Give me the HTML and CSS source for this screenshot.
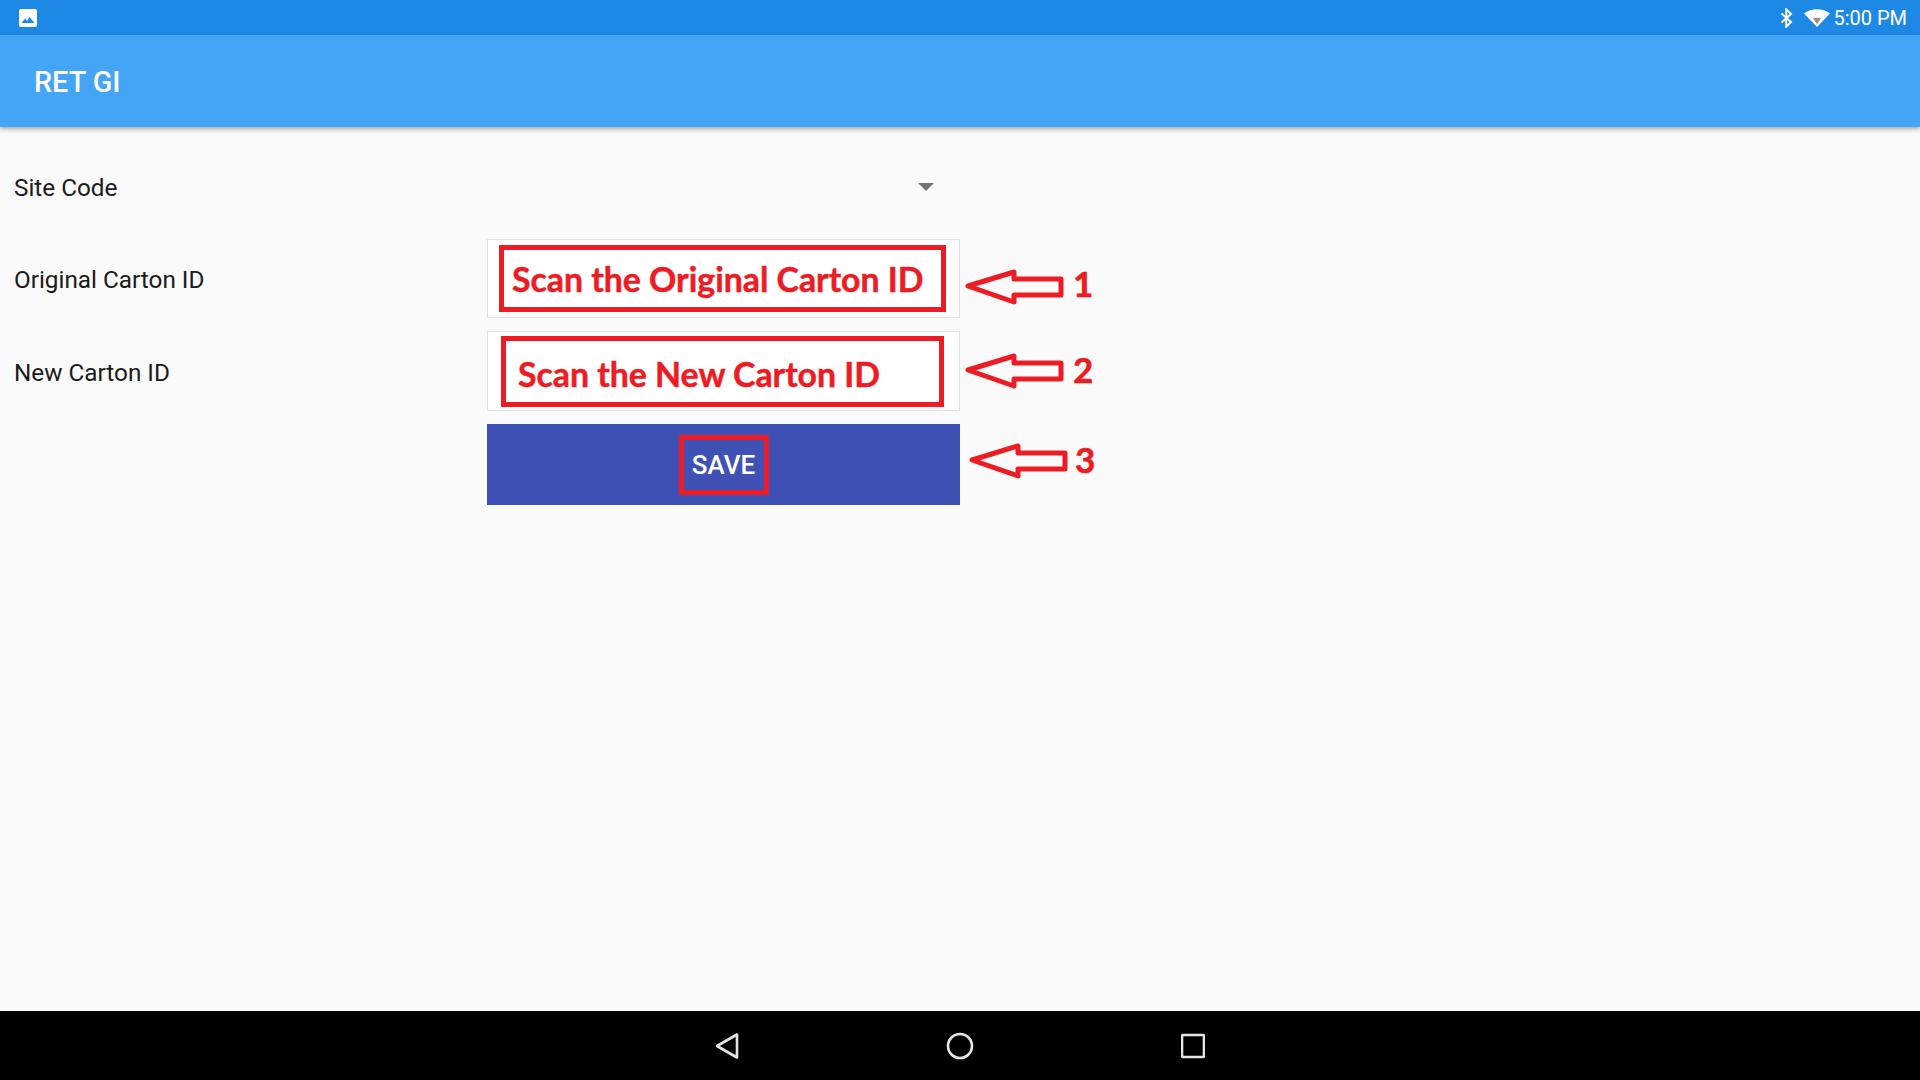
FILE: index.html
```html
<!DOCTYPE html>
<html lang="en">
<head>
<meta charset="utf-8">
<title>RET GI</title>
<link rel="stylesheet" href="styles.css">
</head>
<body>
<div class="screen">
  <div class="status-bar">
    <svg class="pic-icon" viewBox="0 0 18 18"><rect width="18" height="18" rx="2" fill="#fff"/><path d="M2.500 14 6 9.500l2 2.500 2.500-4 5 6z" fill="#1E88E5"/></svg>
    <div class="status-right">
      <svg class="bt-icon" viewBox="0 0 13 20"><path d="M1.500 5.500 11 14 6.300 18.600V1.400L11 6 1.500 14.500" fill="none" stroke="#fff" stroke-width="2"/></svg>
      <svg class="wifi-icon" viewBox="0 0 26 18"><path d="M0 4.500C7-1.200 19-1.200 26 4.500L13 18z" fill="#fff"/><path d="M9 9.500C11.500 8.500 14.500 8.500 17 9.500L13 15z" fill="#8f8f8f"/></svg>
      <span class="clock">5:00 PM</span>
    </div>
  </div>
  <header class="app-bar">RET GI</header>
  <main class="content">
    <div class="form">
      <div class="label label-site">Site Code</div>
      <div class="spinner"><span class="caret"></span></div>
      <div class="label">Original Carton ID</div>
      <div class="field">
        <div class="note note-first">Scan the Original Carton ID</div>
      </div>
      <div class="label label-new">New Carton ID</div>
      <div class="field">
        <div class="note note-second">Scan the New Carton ID</div>
      </div>
      <div class="spacer"></div>
      <button class="save"><span class="save-mark">SAVE</span></button>
    </div>

    <svg class="arrow arrow-one" viewBox="0 0 104 38"><path d="M5 19 51 5V12H98V28H51V35z"/></svg>
    <span class="step step-one">1</span>
    <svg class="arrow arrow-two" viewBox="0 0 104 38"><path d="M5 19 51 5V12H98V28H51V35z"/></svg>
    <span class="step step-two">2</span>
    <svg class="arrow arrow-three" viewBox="0 0 104 38"><path d="M5 19 51 5V12H98V28H51V35z"/></svg>
    <span class="step step-three">3</span>
  </main>
  <nav class="nav-bar">
    <svg class="nav-icon nav-back" viewBox="0 0 24 28"><path d="M2 14 22 2.500V25.500z"/></svg>
    <svg class="nav-icon nav-home" viewBox="0 0 28 28"><circle cx="14" cy="14" r="12"/></svg>
    <svg class="nav-icon nav-recent" viewBox="0 0 24 26"><rect x="1" y="2" width="22" height="22" rx="1"/></svg>
  </nav>
</div>
</body>
</html>
```

FILE: styles.css
```css
* { box-sizing: border-box; }
html, body { margin: 0; height: 100%; }
body { font-family: Roboto, sans-serif; background: #fafafa; }
.screen { width: 1920px; height: 1080px; display: flex; flex-direction: column; overflow: hidden; }

.status-bar {
  height: 35px; flex: none; background: #1e88e5; color: #fff;
  display: flex; align-items: center; justify-content: space-between;
  padding: 0 13px 0 19px;
}
.pic-icon { width: 18px; height: 18px; }
.status-right { display: flex; align-items: center; }
.bt-icon { width: 13px; height: 20px; margin-right: 11px; }
.wifi-icon { width: 26px; height: 18px; margin-right: 3px; }
.clock { font-size: 20px; line-height: 24px; }

.app-bar {
  height: 92px; flex: none; background: #42a5f5; color: #fff;
  font-size: 28.800px; font-weight: 500; display: flex; align-items: center;
  padding: 2px 0 0 34px;
  box-shadow: 0 2px 5px rgba(0, 0, 0, .35);
  position: relative;
}

.content { flex: 1; position: relative; padding: 21px 0 0 14px; }
.form { display: grid; grid-template-columns: 473px 473px; grid-template-rows: 78px 79px 80px 81px; row-gap: 13px; }
.label { font-size: 24.300px; color: #1b1b1b; display: flex; align-items: center; padding-top: 2px; }
.label-site { padding-top: 1px; }
.label-new { padding-top: 3px; }
.spinner { display: flex; align-items: center; justify-content: flex-end; padding: 0 26px 0 0; }
.caret { width: 0; height: 0; border-left: 8px solid transparent; border-right: 8px solid transparent; border-top: 8px solid #757575; }

.field { background: #fff; border: 1.500px solid #e2e2e2; display: flex; }
.note {
  flex: 1; border: 5px solid #ed1c24; display: flex; align-items: center;
  color: #ed1c24; font-family: Lato, sans-serif; font-weight: 700; font-size: 33.800px; white-space: nowrap;
  -webkit-text-stroke: .5px #ed1c24;
}
.note-first { margin: 5px 13px 5px 11px; padding-left: 8px; }
.note-second { margin: 4px 15px 3px 13px; padding: 4px 0 0 12px; }

.spacer { grid-column: 1; }
.save {
  background: #3f51b5; border: 0; padding: 0; color: #fff;
  font-family: Roboto, sans-serif; font-weight: 500; font-size: 26px;
  display: flex; align-items: center; justify-content: center;
}
.save-mark { border: 5px solid #ed1c24; width: 90px; height: 60px; padding-top: 1px; display: flex; align-items: center; justify-content: center; }

.arrow { position: absolute; width: 104px; height: 38px; overflow: visible; }
.arrow path { fill: none; stroke: #ed1c24; stroke-width: 5; stroke-linejoin: round; }
.arrow-one { left: 963px; top: 140px; }
.arrow-two { left: 963px; top: 224px; }
.arrow-three { left: 967px; top: 314px; }
.step { position: absolute; color: #ed1c24; font-family: Lato, sans-serif; font-weight: 700; font-size: 35px; line-height: 40px; -webkit-text-stroke: .6px #ed1c24; }
.step-one { left: 1073px; top: 136px; }
.step-two { left: 1073px; top: 222px; }
.step-three { left: 1075px; top: 312px; }

.nav-bar {
  height: 69px; flex: none; background: #000;
  display: flex; align-items: center; justify-content: center; gap: 207px;
}
.nav-icon * { fill: none; stroke: #e6e6e6; stroke-width: 2.600; stroke-linejoin: round; }
.nav-back { width: 24px; height: 28px; }
.nav-home { width: 28px; height: 28px; }
.nav-recent { width: 24px; height: 26px; }
```
